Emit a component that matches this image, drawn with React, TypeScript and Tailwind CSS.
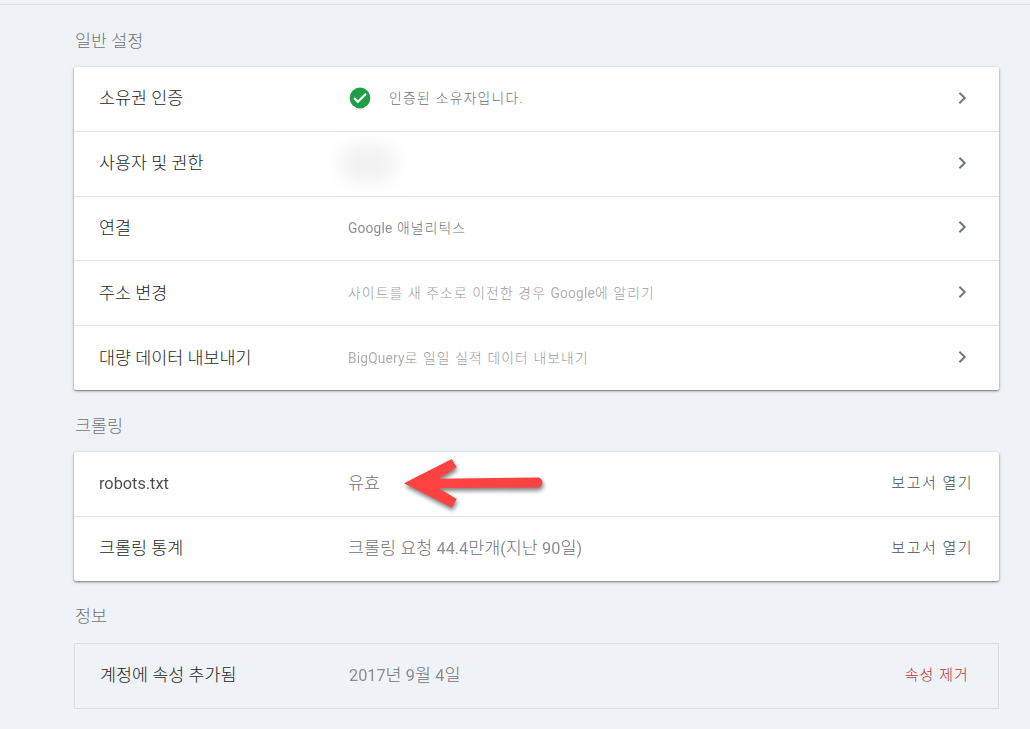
import React from 'react';
import clsx from 'clsx';

type Row = {
  label: string;
  value: React.ReactNode;
  action?: string;
};

const generalRows: Row[] = [
  {
    label: '소유권 인증',
    value: (
      <span className="flex items-center">
        <CheckBadge />
        <span className="ml-[18px] text-[13.8px] tracking-[1.3px] text-[#707376]">인증된 소유자입니다.</span>
      </span>
    ),
  },
  {
    label: '사용자 및 권한',
    value: <span className="-ml-[8px] block h-9 w-14 rounded-full bg-[#f1f1f1] blur-[9px]" />,
  },
  {
    label: '연결',
    value: (
      <span className="text-[13.8px] tracking-[1.15px] text-[#707376]">
        <Latin small>Google</Latin> 애널리틱스
      </span>
    ),
  },
  {
    label: '주소 변경',
    value: (
      <span className="text-[13.8px] tracking-[1.15px] text-[#9c9c9c]">
        사이트를 새 주소로 이전한 경우 <Latin small>Google</Latin>에 알리기
      </span>
    ),
  },
  {
    label: '대량 데이터 내보내기',
    value: (
      <span className="text-[13.8px] tracking-[1.15px] text-[#9c9c9c]">
        <Latin small>BigQuery</Latin>로 일일 실적 데이터 내보내기
      </span>
    ),
  },
];

const crawlRows: Row[] = [
  {
    label: 'robots.txt',
    value: (
      <span className="relative text-[17.4px] text-[#707376]">
        유효
        <Arrow />
      </span>
    ),
    action: '보고서 열기',
  },
  {
    label: '크롤링 통계',
    value: (
      <span className="text-[17.4px] text-[#707376]">
        크롤링 요청 <Latin>44.4</Latin>만개<Latin>(</Latin>지난 <Latin>90</Latin>일<Latin>)</Latin>
      </span>
    ),
    action: '보고서 열기',
  },
];

// Roboto reads larger and heavier than the Korean face
function Latin({ children, small }: { children: React.ReactNode; small?: boolean }) {
  return (
    <span
      className={clsx(
        'font-normal opacity-80',
        small ? 'text-[13.8px] tracking-[0.15px]' : 'text-[16.3px] tracking-normal',
      )}
    >
      {children}
    </span>
  );
}

function CheckBadge() {
  return (
    <svg className="ml-px h-[22px] w-[22px]" viewBox="0 0 22 22">
      <circle cx="11" cy="11" r="10.4" fill="#1e9f45" />
      <path d="M5.1 11.1 L8.9 14.8 L17 6.7" fill="none" stroke="#fff" strokeWidth="2.1" />
    </svg>
  );
}

function Chevron() {
  return (
    <svg className="mr-[32px] h-[13px] w-[9px] -translate-y-[0.5px]" viewBox="0 0 9 13">
      <path d="M1.4 1.3 L6.7 6.5 L1.4 11.7" fill="none" stroke="#757a7a" strokeWidth="2" />
    </svg>
  );
}

function Arrow() {
  return (
    <svg
      className="absolute left-[50px] top-[-18px] h-[64px] w-[152px] drop-shadow-[1px_3px_2px_rgba(0,0,0,0.5)]"
      viewBox="0 0 152 64"
    >
      <path
        d="M6 28.3 L53.7 4 L58.7 12.2 L40.3 23.7 L139.5 22.5 A5 5 0 0 1 139.5 32.5 L40.3 33 L58.7 44 L53.7 52.5 Z"
        fill="#fe4141"
      />
    </svg>
  );
}

function SectionTitle({ children, className }: { children: React.ReactNode; className?: string }) {
  return <h2 className={clsx('pl-px text-[17.4px] leading-6 text-[#707376]', className)}>{children}</h2>;
}

function Card({ rows, className }: { rows: Row[]; className?: string }) {
  return (
    <div
      className={clsx(
        'rounded-[2px] bg-white shadow-[0_1px_2px_rgba(0,0,0,0.45),0_1px_4px_rgba(0,0,0,0.14)]',
        className,
      )}
    >
      {rows.map((row) => (
        <div
          key={row.label}
          className="flex h-[64.8px] items-center border-b border-[#e2e3e6] pb-px pl-[25px] last:h-[64px] last:border-b-0"
        >
          <div className="w-[249px] text-[17.4px] text-[#1c1f22]">
            {row.label === 'robots.txt' ? <Latin>{row.label}</Latin> : row.label}
          </div>
          <div className="flex-1">{row.value}</div>
          {row.action ? (
            <a className="mr-[26px] text-[15px] tracking-[1.5px] text-[#3f4e54]">{row.action}</a>
          ) : (
            <Chevron />
          )}
        </div>
      ))}
    </div>
  );
}

export default function App() {
  return (
    <main className="h-[729px] overflow-hidden bg-[#eff3f8] pt-[4px] font-['Roboto','Noto_Sans_CJK_KR',sans-serif] font-light">
      <div className="border-t border-[#dcdfe4]" />
      <div className="ml-[74px] w-[925px]">
        <SectionTitle className="pt-[24px]">일반 설정</SectionTitle>
        <Card rows={generalRows} className="mt-[14px]" />
        <SectionTitle className="mt-[23.8px]">크롤링</SectionTitle>
        <Card rows={crawlRows} className="mt-[14px]" />
        <SectionTitle className="mt-[23.5px]">정보</SectionTitle>

        {/* Property info */}
        <div className="mt-[14.5px] flex h-[66px] items-center border border-[#d9dce1] pb-[2px] pl-[25px]">
          <div className="w-[249px] text-[17.4px] text-[#1c1f22]">계정에 속성 추가됨</div>
          <div className="flex-1 text-[17.4px] text-[#707376]">
            <Latin>2017</Latin>년 <Latin>9</Latin>월 <Latin>4</Latin>일
          </div>
          <a className="mr-[29px] text-[15px] tracking-[1.1px] text-[#c5302d]">속성 제거</a>
        </div>
      </div>
    </main>
  );
}
